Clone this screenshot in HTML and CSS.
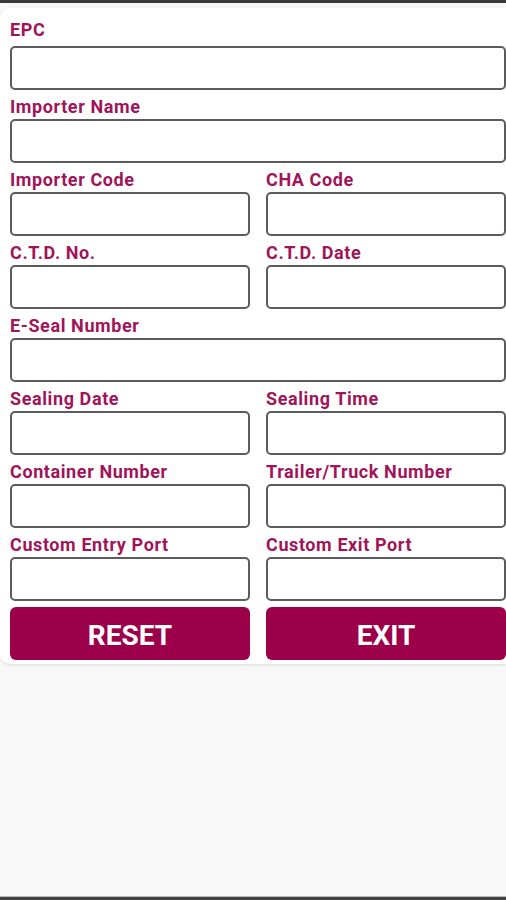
FILE: index.html
```html
<!DOCTYPE html>
<html lang="en">
<head>
<meta charset="utf-8">
<title>E-Seal Form</title>
<link rel="stylesheet" href="styles.css">
</head>
<body>
<div class="topbar"></div>
<div class="card">
  <div class="field first">
    <label class="label">EPC</label>
    <div class="input"></div>
  </div>
  <div class="field">
    <label class="label">Importer Name</label>
    <div class="input"></div>
  </div>
  <div class="row">
    <div class="field"><label class="label">Importer Code</label><div class="input"></div></div>
    <div class="field"><label class="label">CHA Code</label><div class="input"></div></div>
  </div>
  <div class="row">
    <div class="field"><label class="label">C.T.D. No.</label><div class="input"></div></div>
    <div class="field"><label class="label">C.T.D. Date</label><div class="input"></div></div>
  </div>
  <div class="field">
    <label class="label">E-Seal Number</label>
    <div class="input"></div>
  </div>
  <div class="row">
    <div class="field"><label class="label">Sealing Date</label><div class="input"></div></div>
    <div class="field"><label class="label">Sealing Time</label><div class="input"></div></div>
  </div>
  <div class="row">
    <div class="field"><label class="label">Container Number</label><div class="input"></div></div>
    <div class="field"><label class="label">Trailer/Truck Number</label><div class="input"></div></div>
  </div>
  <div class="row">
    <div class="field"><label class="label">Custom Entry Port</label><div class="input"></div></div>
    <div class="field"><label class="label">Custom Exit Port</label><div class="input"></div></div>
  </div>
  <div class="row buttons">
    <button class="btn">RESET</button>
    <button class="btn">EXIT</button>
  </div>
</div>
<div class="spacer"></div>
<div class="bottombar"></div>
</body>
</html>
```
FILE: styles.css
```css
* { box-sizing: border-box; }
html, body { margin: 0; padding: 0; height: 900px; }
body {
  background: #f8f8f8;
  display: flex;
  flex-direction: column;
  font-family: Roboto, "Liberation Sans", sans-serif;
  overflow: hidden;
}
.topbar { height: 3px; background: #3a3a3a; flex: none; }
.bottombar { height: 4px; background: #444; flex: none; border-top: 1px solid #bbb; }
.spacer { flex: 1; }
.card {
  margin-top: 5px;
  background: #fff;
  border-radius: 10px 0 0 10px;
  box-shadow: 0 1px 3px rgba(0,0,0,0.12);
  padding: 5px 0 4px 10px;
  flex: none;
}
.field { display: flex; flex-direction: column; }
.label {
  display: block;
  color: #a01458;
  font-weight: 700;
  font-size: 18px;
  letter-spacing: 0.6px;
  line-height: 20px;
  margin: 7px 0 2px 0;
}
.first .label { margin-bottom: 6px; }
.input {
  height: 44px;
  border: 2px solid #5c5c5c;
  border-radius: 5px;
  background: #fff;
}
.row {
  display: grid;
  grid-template-columns: 240px 240px;
  column-gap: 16px;
}
.buttons { margin-top: 6px; }
.btn {
  height: 53px;
  border: none;
  border-radius: 6px;
  background: #9d004b;
  color: #fff;
  font-family: Roboto, "Liberation Sans", sans-serif;
  font-weight: 700;
  font-size: 28px;
  padding: 3px 0 0 0;
  letter-spacing: 0;
}
```
